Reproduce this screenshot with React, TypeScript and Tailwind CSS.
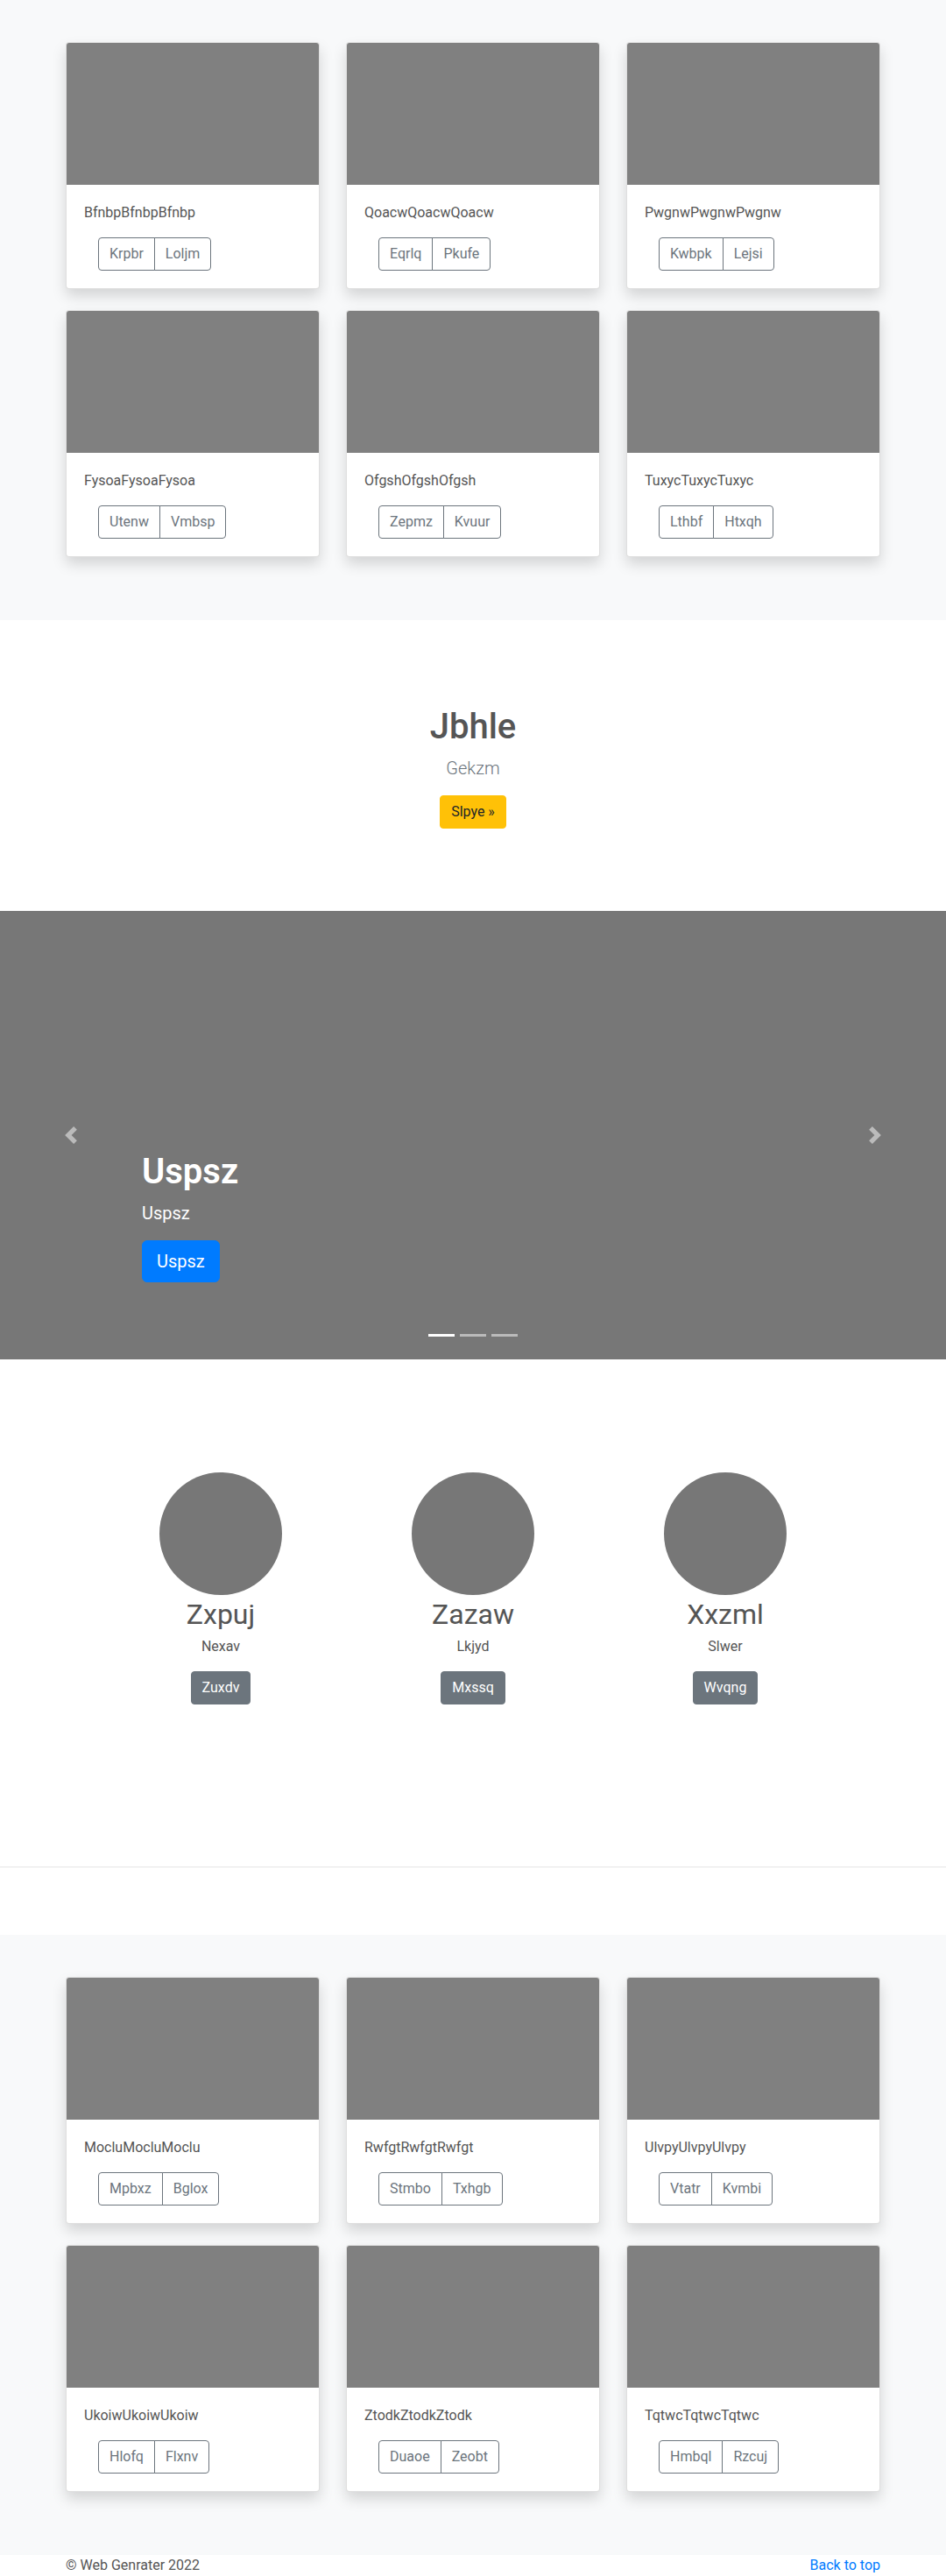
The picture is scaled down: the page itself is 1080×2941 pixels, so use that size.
import React from "react";

const row1 = [
  { t: "BfnbpBfnbpBfnbp", a: "Krpbr", b: "Loljm" },
  { t: "QoacwQoacwQoacw", a: "Eqrlq", b: "Pkufe" },
  { t: "PwgnwPwgnwPwgnw", a: "Kwbpk", b: "Lejsi" },
  { t: "FysoaFysoaFysoa", a: "Utenw", b: "Vmbsp" },
  { t: "OfgshOfgshOfgsh", a: "Zepmz", b: "Kvuur" },
  { t: "TuxycTuxycTuxyc", a: "Lthbf", b: "Htxqh" },
];

const row2 = [
  { t: "MocluMocluMoclu", a: "Mpbxz", b: "Bglox" },
  { t: "RwfgtRwfgtRwfgt", a: "Stmbo", b: "Txhgb" },
  { t: "UlvpyUlvpyUlvpy", a: "Vtatr", b: "Kvmbi" },
  { t: "UkoiwUkoiwUkoiw", a: "Hlofq", b: "Flxnv" },
  { t: "ZtodkZtodkZtodk", a: "Duaoe", b: "Zeobt" },
  { t: "TqtwcTqtwcTqtwc", a: "Hmbql", b: "Rzcuj" },
];

function Card({ t, a, b }: { t: string; a: string; b: string }) {
  return (
    <div className="mb-6 bg-white border border-[rgba(0,0,0,0.125)] rounded overflow-hidden shadow-[0_8px_16px_rgba(0,0,0,0.15)]">
      <div className="h-[162px] bg-[#808080]" />
      <div className="p-5">
        <p className="text-base leading-6 mb-4 text-[#555]">{t}</p>
        <div className="ml-4 flex">
          <button className="px-3 py-1.5 text-base leading-6 border border-[#6c757d] text-[#6c757d] rounded-l bg-transparent">
            {a}
          </button>
          <button className="-ml-px px-3 py-1.5 text-base leading-6 border border-[#6c757d] text-[#6c757d] rounded-r bg-transparent">
            {b}
          </button>
        </div>
      </div>
    </div>
  );
}

function Album({ items }: { items: { t: string; a: string; b: string }[] }) {
  return (
    <section className="bg-[#f8f9fa] py-12">
      <div className="w-[930px] mx-auto grid grid-cols-3 gap-x-[30px]">
        {items.map((c) => (
          <Card key={c.t} {...c} />
        ))}
      </div>
    </section>
  );
}

const people = [
  { n: "Zxpuj", s: "Nexav", b: "Zuxdv" },
  { n: "Zazaw", s: "Lkjyd", b: "Mxssq" },
  { n: "Xxzml", s: "Slwer", b: "Wvqng" },
];

export default function App() {
  return (
    <div className="font-['Roboto','Segoe_UI',sans-serif] text-[#555] bg-white">
      <Album items={row1} />

      <section className="pt-[98px] pb-[94px] text-center">
        <h1 className="text-[40px] leading-[48px] font-medium text-[#555] mb-2">Jbhle</h1>
        <p className="text-xl leading-[30px] font-light text-[#6c757d] mb-4">Gekzm</p>
        <button className="px-3 py-1.5 text-base leading-6 bg-[#ffc107] border border-[#ffc107] text-[#212529] rounded">
          Slpye »
        </button>
      </section>

      <section className="relative h-[512px] bg-[#777]">
        <div className="absolute left-0 top-0 bottom-0 w-[15%] flex items-center justify-center opacity-50">
          <svg width="20" height="20" viewBox="0 0 8 8" fill="#fff">
            <path d="M5.25 0l-4 4 4 4 1.5-1.5L4.25 4l2.5-2.5L5.25 0z" />
          </svg>
        </div>
        <div className="absolute right-0 top-0 bottom-0 w-[15%] flex items-center justify-center opacity-50">
          <svg width="20" height="20" viewBox="0 0 8 8" fill="#fff">
            <path d="M2.75 0l-1.5 1.5L3.75 4l-2.5 2.5L2.75 8l4-4-4-4z" />
          </svg>
        </div>
        <div className="absolute left-[15%] right-[15%] bottom-[88px] text-white text-left">
          <h1 className="text-[40px] leading-[48px] font-semibold mb-2">Uspsz</h1>
          <p className="text-xl leading-[30px] mb-4">Uspsz</p>
          <button className="px-4 py-2 text-xl leading-[30px] bg-[#007bff] border border-[#007bff] text-white rounded-md">
            Uspsz
          </button>
        </div>
        <div className="absolute left-0 right-0 bottom-4 flex justify-center">
          <span className="w-[30px] h-[3px] my-[10px] mx-[3px] bg-white" />
          <span className="w-[30px] h-[3px] my-[10px] mx-[3px] bg-white opacity-50" />
          <span className="w-[30px] h-[3px] my-[10px] mx-[3px] bg-white opacity-50" />
        </div>
      </section>

      <section className="pt-[129px] pb-[185px]">
        <div className="w-[864px] mx-auto grid grid-cols-3">
          {people.map((p) => (
            <div key={p.n} className="text-center">
              <div className="w-[140px] h-[140px] rounded-full bg-[#777] mx-auto" />
              <h2 className="mt-[3px] text-[32px] leading-[38px] font-normal text-[#555] mb-[6px]">{p.n}</h2>
              <p className="text-base leading-6 mb-4 text-[#555]">{p.s}</p>
              <button className="px-3 py-1.5 text-base leading-6 bg-[#6c757d] border border-[#6c757d] text-white rounded">
                {p.b}
              </button>
            </div>
          ))}
        </div>
      </section>
      <div className="h-px bg-[#e5e5e5] mb-[77px]" />

      <Album items={row2} />

      <footer className="w-[930px] mx-auto flex justify-between text-base leading-6">
        <span className="text-[#555]">© Web Genrater 2022</span>
        <a href="#" className="text-[#007bff]">
          Back to top
        </a>
      </footer>
    </div>
  );
}
